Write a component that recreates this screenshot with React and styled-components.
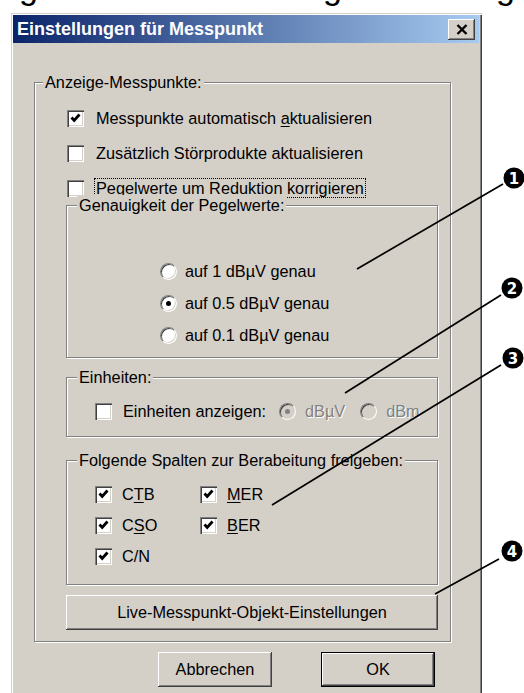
import React from 'react';
import styled, { createGlobalStyle } from 'styled-components';

const GlobalStyle = createGlobalStyle`
	html, body {
		margin: 0;
		padding: 0;
		background: #fff;
	}
	body {
		font-family: "Liberation Sans", Arial, sans-serif;
	}
`;

const face = '#d4d0c8';

const Page = styled.div`
	position: relative;
	width: 524px;
	height: 693px;
	overflow: hidden;
	background: #fff;
`;

// only the descenders of the document line above the dialog are visible
const Caption = styled.div`
	height: 13px;
	overflow: hidden;
`;

const CaptionLine = styled.div`
	display: flex;
	height: 34px;
	margin-top: -30px;
	font-size: 34px;
	line-height: 34px;
	color: #000;
`;

const CaptionCell = styled.span`
	width: ${(p) => p.$w}px;
	flex: none;
	display: flex;
	justify-content: flex-end;
	white-space: nowrap;
`;

const Dialog = styled.div`
	margin-left: 11px;
	width: 471px;
	height: 700px;
	box-sizing: border-box;
	padding: 2px 3px 0 2px;
	background: ${face};
	box-shadow: inset 1px 1px 0 ${face}, inset 2px 2px 0 #fff,
		inset -1px -1px 0 #404040, inset -2px -2px 0 #808080;
`;

const TitleBar = styled.div`
	height: 28px;
	display: flex;
	align-items: center;
	justify-content: space-between;
	padding: 0 4px;
	background: linear-gradient(to right, #0a246a, #a6caf0);
`;

const Title = styled.span`
	color: #fff;
	font-weight: bold;
	font-size: 18px;
`;

const raised = `
	box-shadow: inset -1px -1px 0 #404040, inset 1px 1px 0 #fff,
		inset -2px -2px 0 #808080, inset 2px 2px 0 ${face};
`;

const CloseButton = styled.span`
	width: 27px;
	height: 21px;
	display: flex;
	align-items: center;
	justify-content: center;
	background: ${face};
	${raised}
`;

const Body = styled.div`
	padding: 39px 0 0 21px;
`;

const GroupBox = styled.div`
	position: relative;
	box-sizing: border-box;
	border: 1px solid #808080;
	box-shadow: inset 1px 1px 0 #fff, 1px 1px 0 #fff;
`;

const OuterGroup = styled(GroupBox)`
	width: 417px;
	padding: 25px 0 11px 31px;
	display: flex;
	flex-direction: column;
`;

const InnerGroup = styled(GroupBox)`
	width: 372px;
	height: ${(p) => p.$h}px;
	margin-top: ${(p) => p.$top}px;
	padding: ${(p) => p.$pad};
`;

const Legend = styled.span`
	position: absolute;
	top: -11px;
	left: ${(p) => p.$left}px;
	padding: 0 2px;
	background: ${face};
	font-size: 16.3px;
	line-height: 20px;
	color: #000;
`;

const OptionList = styled.div`
	display: flex;
	flex-direction: column;
	gap: ${(p) => p.$gap}px;
	padding-left: ${(p) => p.$indent || 0}px;
`;

const Option = styled.div`
	height: 20px;
	display: flex;
	align-items: center;
	gap: ${(p) => p.$gap}px;
	margin-left: ${(p) => p.$shift || 0}px;
`;

const Label = styled.span`
	font-size: 16.3px;
	line-height: 20px;
	white-space: nowrap;
	color: ${(p) => (p.$disabled ? '#808080' : '#000')};
	text-shadow: ${(p) => (p.$disabled ? '1px 1px 0 #fff' : 'none')};
`;

const FocusLabel = styled(Label)`
	box-sizing: border-box;
	height: 20px;
	border: 1px dotted #000;
	padding: 0 1px;
	margin-left: -2px;
	line-height: 18px;
`;

const U = styled.span`
	text-decoration: underline;
	text-underline-offset: 2px;
`;

const Box = styled.span`
	flex: none;
	width: 17px;
	height: 17px;
	box-sizing: border-box;
	display: flex;
	align-items: center;
	justify-content: center;
	background: #fff;
	box-shadow: inset 1px 1px 0 #808080, inset 2px 2px 0 #404040,
		inset -1px -1px 0 #fff, inset -2px -2px 0 ${face};
`;

const RadioCircle = styled.span`
	flex: none;
	width: 17px;
	height: 17px;
	box-sizing: border-box;
	border-radius: 50%;
	border: 1.5px solid;
	border-color: #808080 #fff #fff #808080;
	background: ${(p) => (p.$disabled ? face : '#fff')};
	box-shadow: inset 1px 1px 0 #404040, inset -1px -1px 0 ${face};
	display: flex;
	align-items: center;
	justify-content: center;
`;

const Dot = styled.span`
	width: 5px;
	height: 5px;
	border-radius: 50%;
	background: ${(p) => (p.$disabled ? '#808080' : '#000')};
`;

const UnitRow = styled.div`
	display: flex;
	align-items: center;
	height: 20px;
`;

const ColumnGrid = styled.div`
	display: grid;
	grid-template-columns: 105px 105px;
	grid-auto-rows: 20px;
	row-gap: 11px;
	padding-left: 28px;
`;

const Button = styled.div`
	box-sizing: border-box;
	width: ${(p) => p.$w}px;
	height: 35px;
	margin-top: ${(p) => p.$top || 0}px;
	display: flex;
	align-items: center;
	justify-content: center;
	background: ${face};
	font-size: 16.3px;
	color: #000;
	${raised}
`;

const DefaultButton = styled(Button)`
	border: 1px solid #000;
`;

const ButtonRow = styled.div`
	display: flex;
	gap: 49px;
	margin: 10px 0 0 124px;
`;

const Overlay = styled.svg`
	position: absolute;
	left: 0;
	top: 0;
	pointer-events: none;
`;

const Check = ({ checked }) => (
	<Box>
		{checked && (
			<svg width="11" height="10" viewBox="0 0 11 10">
				<polyline points="1.5,4.5 4.2,7.5 9.5,1.5" fill="none" stroke="#000" strokeWidth="2.8" />
			</svg>
		)}
	</Box>
);

const Radio = ({ checked, disabled }) => (
	<RadioCircle $disabled={disabled}>{checked && <Dot $disabled={disabled} />}</RadioCircle>
);

const callouts = [
	{ n: 1, cx: 514, cy: 178, x1: 503, y1: 184, x2: 357, y2: 269 },
	{ n: 2, cx: 512, cy: 288, x1: 501, y1: 295, x2: 345, y2: 393 },
	{ n: 3, cx: 513, cy: 358, x1: 501, y1: 365, x2: 272, y2: 505 },
	{ n: 4, cx: 512, cy: 551, x1: 499, y1: 559, x2: 435, y2: 594 },
];

export default function App() {
	return (
		<Page>
			<GlobalStyle />
			<Caption>
				<CaptionLine>
					<CaptionCell $w={38}>Abbildung</CaptionCell>
					<CaptionCell $w={304}>Einstellung</CaptionCell>
					<CaptionCell $w={173}>Anzeig</CaptionCell>
				</CaptionLine>
			</Caption>
			<Dialog>
				<TitleBar>
					<Title>Einstellungen für Messpunkt</Title>
					<CloseButton>
						<svg width="12" height="11" viewBox="0 0 12 11">
							<path d="M1.5 1 L10.5 10 M10.5 1 L1.5 10" stroke="#000" strokeWidth="2.4" />
						</svg>
					</CloseButton>
				</TitleBar>
				<Body>
					<OuterGroup>
						<Legend $left={8}>Anzeige-Messpunkte:</Legend>
						<OptionList $gap={15} $indent={1}>
							<Option $gap={12}>
								<Check checked />
								<Label>
									Messpunkte automatisch <U>a</U>ktualisieren
								</Label>
							</Option>
							<Option $gap={12}>
								<Check />
								<Label>Zusätzlich Störprodukte aktualisieren</Label>
							</Option>
							<Option $gap={12}>
								<Check />
								<FocusLabel>Pegelwerte um Reduktion korrigieren</FocusLabel>
							</Option>
						</OptionList>

						<InnerGroup $h={153} $top={7} $pad="55px 0 0 93px">
							<Legend $left={10}>Genauigkeit der Pegelwerte:</Legend>
							<OptionList $gap={12}>
								<Option $gap={8}>
									<Radio />
									<Label>auf 1 dBµV genau</Label>
								</Option>
								<Option $gap={8}>
									<Radio checked />
									<Label>auf 0.5 dBµV genau</Label>
								</Option>
								<Option $gap={8}>
									<Radio />
									<Label>auf 0.1 dBµV genau</Label>
								</Option>
							</OptionList>
						</InnerGroup>

						<InnerGroup $h={60} $top={19} $pad="23px 0 0 28px">
							<Legend $left={10}>Einheiten:</Legend>
							<UnitRow>
								<Option $gap={11}>
									<Check />
									<Label>Einheiten anzeigen:</Label>
								</Option>
								<Option $gap={9} $shift={13}>
									<Radio checked disabled />
									<Label $disabled>dBµV</Label>
								</Option>
								<Option $gap={9} $shift={15}>
									<Radio disabled />
									<Label $disabled>dBm</Label>
								</Option>
							</UnitRow>
						</InnerGroup>

						<InnerGroup $h={125} $top={23} $pad="23px 0 0 0">
							<Legend $left={10}>Folgende Spalten zur Berabeitung freigeben:</Legend>
							<ColumnGrid>
								<Option $gap={10}>
									<Check checked />
									<Label>
										C<U>T</U>B
									</Label>
								</Option>
								<Option $gap={10}>
									<Check checked />
									<Label>
										<U>M</U>ER
									</Label>
								</Option>
								<Option $gap={10}>
									<Check checked />
									<Label>
										C<U>S</U>O
									</Label>
								</Option>
								<Option $gap={10}>
									<Check checked />
									<Label>
										<U>B</U>ER
									</Label>
								</Option>
								<Option $gap={10}>
									<Check checked />
									<Label>C/N</Label>
								</Option>
							</ColumnGrid>
						</InnerGroup>

						<Button $w={372} $top={10}>
							Live-Messpunkt-Objekt-Einstellungen
						</Button>
					</OuterGroup>

					<ButtonRow>
						<Button $w={114}>Abbrechen</Button>
						<DefaultButton $w={114}>OK</DefaultButton>
					</ButtonRow>
				</Body>
			</Dialog>

			<Overlay width="524" height="693" viewBox="0 0 524 693">
				{callouts.map((c) => (
					<g key={c.n}>
						<line x1={c.x1} y1={c.y1} x2={c.x2} y2={c.y2} stroke="#000" strokeWidth="1.7" />
						<circle cx={c.cx} cy={c.cy} r="10.5" fill="#000" />
						<text
							x={c.cx}
							y={c.cy + 5.5}
							fill="#fff"
							fontSize="15"
							fontWeight="bold"
							textAnchor="middle"
							fontFamily="DejaVu Sans, sans-serif"
						>
							{c.n}
						</text>
					</g>
				))}
			</Overlay>
		</Page>
	);
}
